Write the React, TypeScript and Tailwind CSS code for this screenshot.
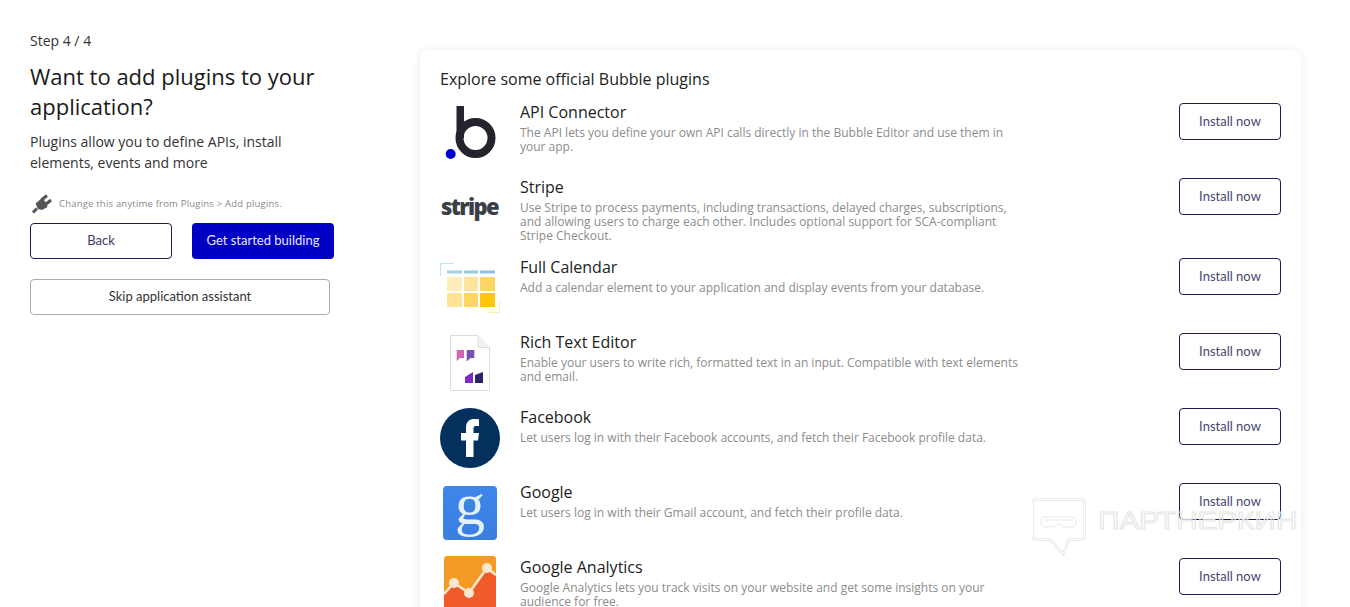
import React from "react";

const BubbleIcon = () => (
  <svg width="60" height="60" viewBox="0 0 60 60">
    <rect x="16.500" y="3" width="7.500" height="32" fill="#24242c" />
    <circle cx="35.500" cy="35" r="16" fill="none" stroke="#24242c" stroke-width="8" />
    <circle cx="10.700" cy="51" r="5" fill="#0000cc" />
  </svg>
);

const CalendarIcon = () => (
  <svg width="60" height="60" viewBox="0 0 60 60">
    <path d="M14 5.500H0.500V18" fill="none" stroke="#bfe3f0" stroke-width="1.200" />
    <path d="M59.500 42V54.500H47" fill="none" stroke="#fbefc0" stroke-width="1.200" />
    <rect x="7" y="12.500" width="15" height="3" fill="#9fd3e6" />
    <rect x="24" y="12.500" width="14" height="3" fill="#93cbdc" />
    <rect x="40" y="12.500" width="15" height="3" fill="#8cc4d4" />
    <rect x="7" y="19" width="15" height="14" fill="#fdeebb" />
    <rect x="24" y="19" width="14" height="14" fill="#fde39b" />
    <rect x="40" y="19" width="15" height="14" fill="#fdd665" />
    <rect x="7" y="35" width="15" height="14" fill="#fde393" />
    <rect x="24" y="35" width="14" height="14" fill="#fdd665" />
    <rect x="40" y="35" width="15" height="14" fill="#fdc70c" />
  </svg>
);

const DocIcon = () => (
  <svg width="60" height="60" viewBox="0 0 60 60">
    <path d="M10.500 2.500H38L49.500 14.500V57.500H10.500Z" fill="#fff" stroke="#dcdcdc" stroke-width="1" />
    <path d="M38 2.500V14.500H49.500" fill="#f2f2f2" stroke="#dcdcdc" stroke-width="1" />
    <path d="M16.700 17H24V25H20L16.700 28Z" fill="#d264b4" />
    <path d="M26.700 17H34.300V25H30.500L26.700 28.500Z" fill="#7a4fb5" />
    <path d="M25 44L33 39V50H25Z" fill="#7c2bc4" />
    <path d="M35 42L43 39V50H35Z" fill="#2c2466" />
  </svg>
);

const FacebookIcon = () => (
  <svg width="60" height="60" viewBox="0 0 60 60">
    <circle cx="30" cy="30" r="30" fill="#04305e" />
    <path d="M26 49V32.500H21V25H26V19.500C26 13.500 29.500 11 34.500 11C36.500 11 38 11.200 39 11.300V18H36C33.800 18 33.500 19 33.500 20.700V25H39L38 32.500H33.500V49Z" fill="#fff" />
  </svg>
);

const GoogleIcon = () => (
  <div className="ml-[3px] mt-[3px] flex h-[54px] w-[54px] items-center justify-center rounded-[4px] bg-gradient-to-b from-[#3f86ea] to-[#3a7ee0]">
    <span className="font-['Liberation_Serif',serif] text-[60px] leading-[54px] text-[#e4f1fb] -translate-y-[9px]">g</span>
  </div>
);

const AnalyticsIcon = () => (
  <svg width="60" height="60" viewBox="0 0 60 60" className="overflow-visible">
    <rect x="4" y="-2" width="52" height="56" rx="3" fill="#f59a24" />
    <path d="M4 36L14 26L29 36L47 12L56 18V53H4Z" fill="#f15a29" />
    <path d="M4 36L14 25L29 35L47 10L56 17" fill="none" stroke="#fde7d0" stroke-width="2.500" />
    <circle cx="14" cy="25" r="5" fill="#fde7d0" />
    <circle cx="29" cy="35" r="5" fill="#fde7d0" />
    <circle cx="47" cy="10" r="5" fill="#fde7d0" />
  </svg>
);

const StripeIcon = () => (
  <div className="flex h-[60px] w-[60px] items-center pb-[1px]">
    <span className="ml-[1px] -translate-y-[1px] font-['Open_Sans',sans-serif] text-[22px] font-extrabold tracking-[-1.600px] text-[#3a3f47]">stripe</span>
  </div>
);

const plugins = [
  { name: "API Connector", h: "h-[75px]", icon: <BubbleIcon />, lines: ["The API lets you define your own API calls directly in the Bubble Editor and use them in", "your app."] },
  { name: "Stripe", h: "h-[80px]", icon: <StripeIcon />, lines: ["Use Stripe to process payments, including transactions, delayed charges, subscriptions,", "and allowing users to charge each other. Includes optional support for SCA-compliant", "Stripe Checkout."] },
  { name: "Full Calendar", h: "h-[75px]", icon: <CalendarIcon />, lines: ["Add a calendar element to your application and display events from your database."] },
  { name: "Rich Text Editor", h: "h-[75px]", icon: <DocIcon />, lines: ["Enable your users to write rich, formatted text in an input. Compatible with text elements", "and email."] },
  { name: "Facebook", h: "h-[75px]", icon: <FacebookIcon />, lines: ["Let users log in with their Facebook accounts, and fetch their Facebook profile data."] },
  { name: "Google", h: "h-[75px]", icon: <GoogleIcon />, lines: ["Let users log in with their Gmail account, and fetch their profile data."] },
  { name: "Google Analytics", h: "h-[75px]", icon: <AnalyticsIcon />, lines: ["Google Analytics lets you track visits on your website and get some insights on your", "audience for free."] },
];

export default function App() {
  return (
    <div className="relative flex h-[607px] overflow-hidden bg-white font-['Open_Sans',sans-serif] text-[#1f1f1f]">
      <div className="w-[420px] shrink-0 pl-[30px] pt-[31px]">
        <p className="text-[14px] leading-[20px] text-[#333]">Step 4 / 4</p>
        <h1 className="mt-[10px] w-[340px] text-[22px] leading-[30px] text-[#1a1a1a]">Want to add plugins to your application?</h1>
        <p className="mt-[10px] w-[300px] text-[14px] leading-[21px] text-[#333]">Plugins allow you to define APIs, install elements, events and more</p>
        <div className="mt-[21px] flex h-[20px] items-center gap-[7px]">
          <svg width="22" height="20" viewBox="0 0 22 20">
            <path d="M3 18.500L7 14.500" stroke="#555" stroke-width="3" fill="none" />
            <path d="M5.500 9.500L12 4L16.500 9L17.500 13L12 16L8 15Z" fill="#555" />
            <path d="M11.500 6L17 1.500M15 11L21 6" stroke="#555" stroke-width="3" fill="none" />
          </svg>
          <span className="text-[9.500px] leading-[14px] tracking-[0.200px] text-[#8a8a8a]">Change this anytime from Plugins &gt; Add plugins.</span>
        </div>
        <div className="mt-[9px] flex gap-[20px] font-['Lato',sans-serif] text-[13px]">
          <button className="h-[36px] w-[142px] rounded-[4px] border border-[#1f1a52] bg-white text-[#3d3a66]">Back</button>
          <button className="h-[36px] w-[142px] rounded-[4px] bg-[#0000c4] text-[#e8e8ff]">Get started building</button>
        </div>
        <button className="mt-[20px] h-[36px] w-[300px] rounded-[4px] border border-[#aaaaaa] bg-white font-['Lato',sans-serif] text-[13px] text-[#333]">Skip application assistant</button>
      </div>

      <div className="mt-[50px] h-[600px] w-[881px] shrink-0 rounded-t-[8px] bg-white px-[20px] pt-[18px] shadow-[0_0_8px_rgba(0,0,0,0.08)]">
        <h2 className="h-[35px] text-[16px] leading-[22px] text-[#222]">Explore some official Bubble plugins</h2>
        {plugins.map((p) => (
          <div key={p.name} className={`flex ${p.h}`}>
            <div className="w-[60px] shrink-0">{p.icon}</div>
            <div className="ml-[20px] w-[510px]">
              <div className="-mt-[1px] text-[16px] leading-[20px] text-[#222]">{p.name}</div>
              <div className="mt-[4px] text-[12px] leading-[14px] text-[#8c8c8c]">
                {p.lines.map((l) => (
                  <div key={l} className="whitespace-nowrap">{l}</div>
                ))}
              </div>
            </div>
            <button className="ml-auto h-[37px] w-[102px] rounded-[4px] border border-[#1f1a52] bg-white font-['Lato',sans-serif] text-[13px] text-[#4a4770]">Install now</button>
          </div>
        ))}
      </div>

      <div className="pointer-events-none absolute left-[1032px] top-[498px] flex h-[58px] items-start">
        <svg width="54" height="58" viewBox="0 0 54 58">
          <path d="M4 1.500H49C51 1.500 52.500 3 52.500 5V38C52.500 40 51 41.500 49 41.500H37L31 56L18 41.500H4C2 41.500 0.500 40 0.500 38V5C0.500 3 2 1.500 4 1.500Z" fill="none" stroke="#e6e6e6" stroke-width="2.500" />
          <path d="M4 1.500H49C51 1.500 52.500 3 52.500 5V38C52.500 40 51 41.500 49 41.500H37L31 56L18 41.500H4C2 41.500 0.500 40 0.500 38V5C0.500 3 2 1.500 4 1.500Z" fill="none" stroke="#fff" stroke-width="1" />
          <path d="M12 19H42C45 19 45 29 40 29H33C30 29 29 26 27 26C25 26 24 29 21 29H13C8 29 8 19 12 19Z" fill="none" stroke="#e6e6e6" />
          <path d="M13 22H41" fill="none" stroke="#e6e6e6" />
        </svg>
        <span className="ml-[12px] mt-[9px] origin-left scale-x-[1.24] font-['Liberation_Sans',sans-serif] text-[24px] font-normal leading-[28px] text-transparent [-webkit-text-stroke:1px_#e6e6e6]">ПАРТНЕРКИН</span>
      </div>
    </div>
  );
}
